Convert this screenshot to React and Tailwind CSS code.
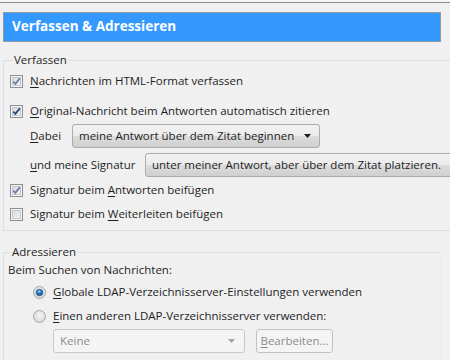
import React from 'react';

const font = { fontFamily: '"Open Sans", "Noto Sans", sans-serif' };

function CheckBox({ checked, light }) {
  return (
    <svg width="13" height="13" viewBox="0 0 13 13" className="shrink-0">
      <defs>
        <linearGradient id="cbfill" x1="0" y1="0" x2="1" y2="1">
          <stop offset="0" stopColor="#d4d7dc" />
          <stop offset="1" stopColor="#f7f7f7" />
        </linearGradient>
      </defs>
      <rect x="0.5" y="0.5" width="12" height="12" fill="#f4f4f4" stroke="#8e8f8f" />
      <rect x="2.5" y="2.5" width="8" height="8" fill="url(#cbfill)" stroke="#c4c8ce" strokeWidth="1" />
      {checked && (
        <path
          d="M3.3 6.6 L5.4 8.9 L9.8 3.4"
          fill="none"
          stroke={light ? '#6f80a8' : '#2b4a86'}
          strokeWidth="1.9"
        />
      )}
    </svg>
  );
}

function Radio({ checked }) {
  return (
    <svg width="13" height="13" viewBox="0 0 13 13" className="shrink-0">
      <defs>
        <radialGradient id="rbOff" cx="0.5" cy="0.4" r="0.6">
          <stop offset="0" stopColor="#f6f6f6" />
          <stop offset="1" stopColor="#d3d5d8" />
        </radialGradient>
        <radialGradient id="rbDot" cx="0.45" cy="0.35" r="0.6">
          <stop offset="0" stopColor="#9fd4f7" />
          <stop offset="0.5" stopColor="#2c7fbf" />
          <stop offset="1" stopColor="#174f84" />
        </radialGradient>
      </defs>
      <circle cx="6.5" cy="6.5" r="6" fill="url(#rbOff)" stroke="#a5a8ab" />
      {checked && <circle cx="6.5" cy="6.5" r="3.3" fill="url(#rbDot)" stroke="#1b4f80" strokeWidth="0.6" />}
    </svg>
  );
}

function Arrow({ disabled }) {
  return (
    <svg width="7" height="4" viewBox="0 0 7 4" className="shrink-0">
      <path d="M0 0 H7 L3.5 4 Z" fill={disabled ? '#a3a3a3' : '#1a1a1a'} />
    </svg>
  );
}

function U({ children }) {
  return <span className="underline underline-offset-2">{children}</span>;
}

function CheckRow({ checked, light, children, className = '' }) {
  return (
    <div className={`flex items-center h-[22px] ${className}`}>
      <CheckBox checked={checked} light={light} />
      <span className="ml-[7px]">{children}</span>
    </div>
  );
}

export default function App() {
  return (
    <div className="w-[450px] h-[360px] overflow-hidden bg-[#f0f0f0] text-[11.5px] text-[#1e1e1e] leading-none" style={font}>
      <div className="h-[2px] bg-[#f7f7f7]" />
      <div className="border-t border-[#8a8a8a] pt-[9px] pl-[3px]">
        <div className="w-[438px] h-[30px] bg-[#3399ff] border border-[#8f9aa5] flex items-center pl-[8px]">
          <span className="text-white font-bold text-[13.5px]">Verfassen &amp; Adressieren</span>
        </div>

        <fieldset className="mt-[10px] w-[438px] border border-[#dadfe3] border-r-[#ececec] rounded-[2px] pl-[6px] pb-[5px]">
          <legend className="ml-[3px] px-[1px] h-[16px] leading-[16px]">Verfassen</legend>
          <CheckRow checked light className="h-[26px]">
            <U>N</U>achrichten im HTML-Format verfassen
          </CheckRow>
          <CheckRow checked className="mt-[6px]">
            <U>O</U>riginal-Nachricht beim Antworten automatisch zitieren
          </CheckRow>
          <div className="flex items-center h-[24px] mt-[2px] pl-[20px]">
            <span className="w-[42px]"><U>D</U>abei</span>
            <div className="w-[248px] h-[24px] flex items-center justify-between pl-[6px] pr-[8px] border border-[#acacac] rounded-[3px] bg-[linear-gradient(#f2f2f2_0%,#ebebeb_50%,#dddddd_51%,#cfcfcf_100%)]">
              <span>meine Antwort über dem Zitat beginnen</span>
              <Arrow />
            </div>
          </div>
          <div className="flex items-center h-[24px] mt-[5px] pl-[20px]">
            <span className="w-[115px]"><U>u</U>nd meine Signatur</span>
            <div className="w-[320px] shrink-0 h-[24px] flex items-center pl-[6px] border border-[#acacac] rounded-[3px] bg-[linear-gradient(#f2f2f2_0%,#ebebeb_50%,#dddddd_51%,#cfcfcf_100%)]">
              <span className="whitespace-nowrap">unter meiner Antwort, aber über dem Zitat platzieren.</span>
            </div>
          </div>
          <CheckRow checked light className="mt-[2px]">
            Signatur beim <U>A</U>ntworten beifügen
          </CheckRow>
          <CheckRow className="mt-[2px]">
            Signatur beim <U>W</U>eiterleiten beifügen
          </CheckRow>
        </fieldset>

        <fieldset className="mt-[13px] w-[438px] h-[130px] border border-[#dadfe3] border-r-[#ececec] rounded-[2px] pl-[4px]">
          <legend className="ml-[3px] px-[1px] h-[16px] leading-[16px]">Adressieren</legend>
          <div className="flex items-center h-[20px]">Beim Suchen von Nachrichten:</div>
          <div className="flex items-center h-[22px] mt-[1px] pl-[25px]">
            <Radio checked />
            <span className="ml-[7px]"><U>G</U>lobale LDAP-Verzeichnisserver-Einstellungen verwenden</span>
          </div>
          <div className="flex items-center h-[22px] mt-[2px] pl-[25px]">
            <Radio />
            <span className="ml-[7px]"><U>E</U>inen anderen LDAP-Verzeichnisserver verwenden:</span>
          </div>
          <div className="flex items-center h-[24px] mt-[2px] pl-[45px] gap-[11px]">
            <div className="w-[192px] h-[24px] flex items-center justify-between pl-[6px] pr-[9px] border border-[#c9c9c9] rounded-[3px] bg-[#f4f4f4] text-[#8d8d8d]">
              <span>Keine</span>
              <Arrow disabled />
            </div>
            <div className="w-[77px] h-[24px] flex items-center justify-center border border-[#c0c3c6] rounded-[3px] bg-[#f4f4f4] text-[#8d8d8d]">
              <span><U>B</U>earbeiten...</span>
            </div>
          </div>
        </fieldset>
      </div>
    </div>
  );
}
